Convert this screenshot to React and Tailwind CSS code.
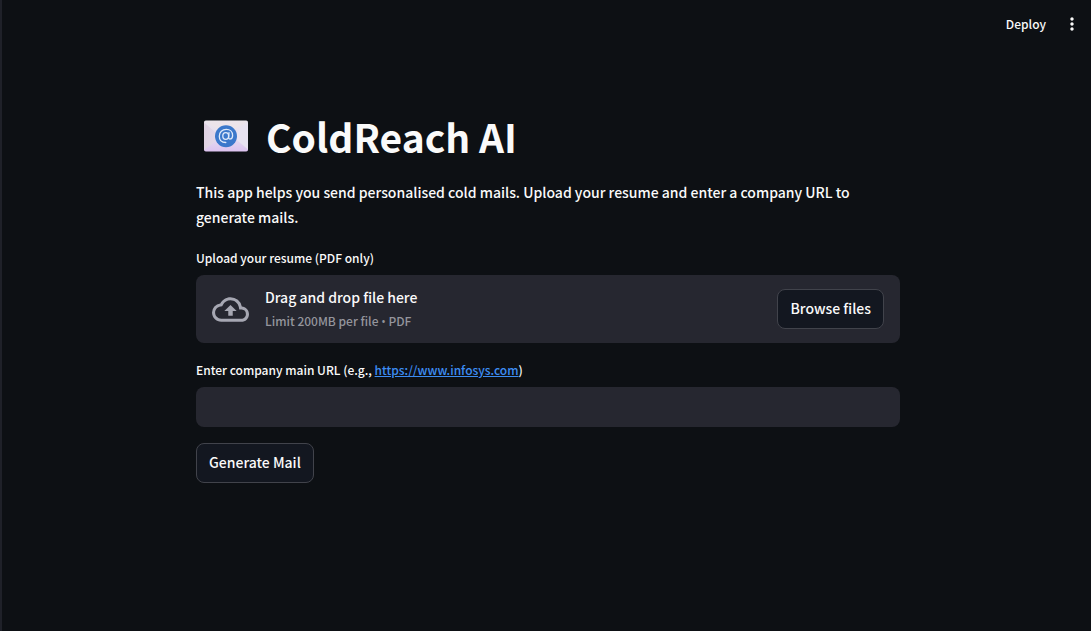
import { useRef } from "react";
import { MdOutlineBackup, MdMoreVert } from "react-icons/md";

function EmailIcon() {
  return (
    <svg viewBox="0 0 44 32" className="h-8 w-11 shrink-0" aria-hidden="true">
      <defs>
        <linearGradient id="paper" x1="0" y1="0" x2="0" y2="1">
          <stop offset="0" stopColor="#ebe6ee" />
          <stop offset="0.55" stopColor="#e5dcef" />
          <stop offset="1" stopColor="#dcc3f0" />
        </linearGradient>
        <linearGradient id="side" x1="0" y1="0" x2="1" y2="0">
          <stop offset="0" stopColor="#dfd2e2" />
          <stop offset="1" stopColor="#e5dbee" />
        </linearGradient>
      </defs>
      <rect y="0.5" width="44" height="31" rx="1.8" fill="url(#paper)" />
      <path d="M0 2.5 L17 17 L0 30 Z" fill="url(#side)" />
      <path d="M44 2.5 L28 16 L44 29.500 Z" fill="#e8e3f1" />
      <path d="M1 1.200 L18 12 H27 L43 1.200 Z" fill="#ece4ea" />
      <circle cx="22" cy="16.200" r="11" fill="#3b78cb" />
      <g fill="none" stroke="#dfeafb" strokeWidth="1.300" strokeLinecap="round">
        <ellipse cx="21.700" cy="16" rx="2.900" ry="3.300" />
        <path d="M25 12.600 L24.600 17.400 C24.500 20 28.600 19.600 28.600 15.400 C28.600 11.600 25.900 9.400 22.300 9.400 C18.300 9.400 15.300 12.300 15.300 16.200 C15.300 20.200 18 22.500 21.800 22.500" />
      </g>
    </svg>
  );
}

export default function App() {
  const fileInput = useRef(null);

  return (
    <div className="min-h-screen border-l-2 border-[#1f2129] bg-[#0d1014] pl-[3px] font-['Noto_Sans_CJK_SC',sans-serif] text-[14px] font-medium text-[#fafafa]">
      <header className="flex h-12 items-center justify-end gap-4 pr-[9px]">
        <button type="button" className="text-[12px] leading-5">
          Deploy
        </button>
        <button type="button" aria-label="Main menu">
          <MdMoreVert className="size-5" />
        </button>
      </header>

      <main className="mx-auto max-w-[736px] px-4 pt-[61px]">
        <div className="flex items-center gap-[18px] pl-2">
          <EmailIcon />
          <h1 className="text-[39px] leading-[54px] font-bold">ColdReach AI</h1>
        </div>

        <p className="mt-[17px] pr-8 leading-[25px]">
          This app helps you send personalised cold mails. Upload your resume and enter a company URL to generate mails.
        </p>

        <form onSubmit={(e) => e.preventDefault()}>
          <label htmlFor="resume" className="mt-[18px] block text-[12px] leading-5">
            Upload your resume (PDF only)
          </label>
          <section className="mt-[7px] flex items-center rounded-lg bg-[#262730] px-4 py-2.5">
            <MdOutlineBackup className="size-[37px] shrink-0 text-[#a6a7b2]" />
            <div className="ml-4 flex-1 leading-6">
              <div>Drag and drop file here</div>
              <div className="text-[12px] leading-6 text-[#94959c]">
                Limit 200MB per file <span className="font-['Open_Sans',sans-serif] leading-none">•</span> PDF
              </div>
            </div>
            <input ref={fileInput} id="resume" type="file" accept=".pdf" className="hidden" />
            <button
              type="button"
              onClick={() => fileInput.current.click()}
              className="h-10 rounded-lg border border-[#41434b] bg-[#131720] px-3 pb-0.5"
            >
              Browse files
            </button>
          </section>

          <div className="mt-[17px] text-[12px] leading-5">
            <label htmlFor="company">Enter company main URL (e.g., </label>
            <a href="https://www.infosys.com" className="text-[#3d8df3] underline">
              https://www.infosys.com
            </a>
            )
          </div>
          <input
            id="company"
            type="text"
            className="mt-[7px] block h-10 w-full rounded-lg bg-[#262730] px-3 outline-none"
          />

          <button
            type="submit"
            className="mt-4 h-10 rounded-lg border border-[#41434b] bg-[#131720] px-3 pb-0.5"
          >
            Generate Mail
          </button>
        </form>
      </main>
    </div>
  );
}
